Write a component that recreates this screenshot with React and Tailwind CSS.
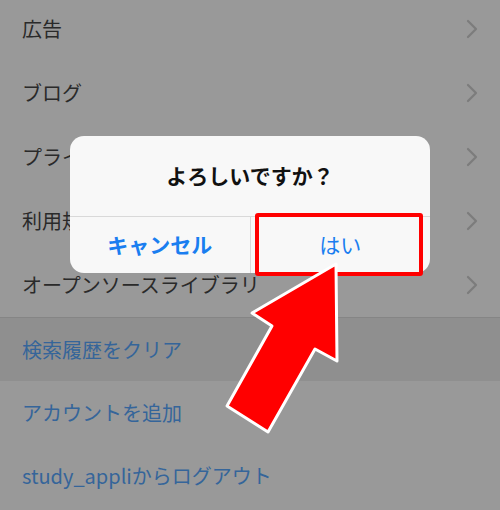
const JP = { fontFamily: '"Noto Sans CJK JP", "Noto Sans", sans-serif' }

const MENU = ['広告', 'ブログ', 'プライバシーポリシー', '利用規約', 'オープンソースライブラリ']

function Chevron() {
  return (
    <svg width="12" height="20" viewBox="0 0 12 20" fill="none" stroke="#7c7c7c" strokeWidth="2.2" strokeLinecap="round" strokeLinejoin="round">
      <polyline points="2 2 10 10 2 18" />
    </svg>
  )
}

export default function App() {
  return (
    <div className="relative w-[500px] h-[510px] overflow-hidden bg-[#999999]" style={JP}>
      {/* 背景のリスト（暗転済み） */}
      <div className="flex flex-col -mt-[3px]">
        {MENU.map((label) => (
          <div key={label} className="h-[64px] flex items-center justify-between pl-[22px] pr-[22px]">
            <span className="text-[20px] text-[#2a2a2a]">{label}</span>
            <Chevron />
          </div>
        ))}
        <div className="h-[64px] flex items-center pl-[22px] bg-[#8f8f8f] border-t border-[#858585]">
          <span className="text-[20px] text-[#35659a]">検索履歴をクリア</span>
        </div>
        <div className="h-[63px] flex items-center pl-[22px]">
          <span className="text-[20px] text-[#35659a]">アカウントを追加</span>
        </div>
        <div className="h-[63px] flex items-center pl-[22px]">
          <span className="text-[20px] text-[#35659a]">study_appliからログアウト</span>
        </div>
      </div>

      {/* アラート */}
      <div className="absolute left-[70px] top-[136px] w-[360px] rounded-[14px] bg-[#f8f8f8] flex flex-col overflow-hidden">
        <div className="h-[80px] flex items-center justify-center">
          <span className="text-[21px] font-bold text-[#111]">よろしいですか？</span>
        </div>
        <div className="h-[57px] flex border-t border-[#d9d9d9]">
          <div className="flex-1 flex items-center justify-center border-r border-[#d9d9d9]">
            <span className="text-[21px] font-bold text-[#1a7ef0]">キャンセル</span>
          </div>
          <div className="flex-1 flex items-center justify-center">
            <span className="text-[21px] text-[#1a7ef0]">はい</span>
          </div>
        </div>
      </div>

      {/* 強調枠 */}
      <div className="absolute left-[255px] top-[213px] w-[168px] h-[63px] border-[4px] border-[#ff0000] rounded-[3px]" />

      {/* 矢印 */}
      <svg className="absolute left-0 top-0" width="500" height="510" viewBox="0 0 500 510">
        <polygon
          points="336,264 337,361 315,349 268,432 227,406 272,326 252,313"
          fill="#ff0000"
          stroke="#ffffff"
          strokeWidth="3"
          strokeLinejoin="round"
        />
      </svg>
    </div>
  )
}
